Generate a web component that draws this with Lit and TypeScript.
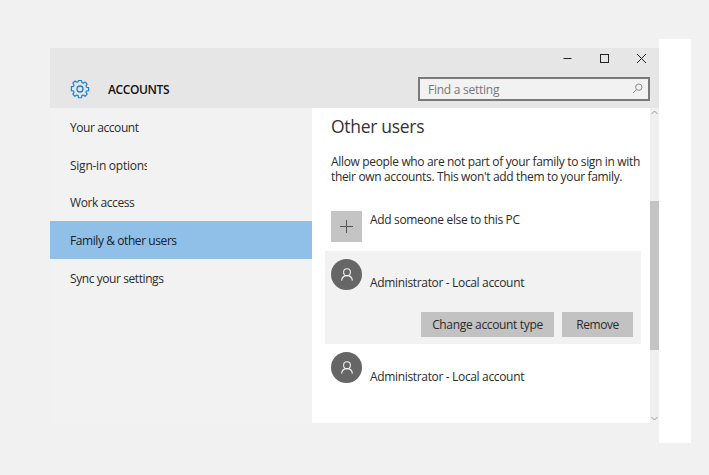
import { LitElement, html, css } from "lit";
import { customElement } from "lit/decorators.js";

const person = html`<svg class="person" viewBox="0 0 16 16" fill="none" stroke="#f0f0f0" stroke-width="1.1"><circle cx="8" cy="5.2" r="3.4"/><path d="M2.600 13.600c.3-3 2.500-5 5.400-5s5.100 2 5.400 5"/></svg>`;

@customElement("app-root")
export class AppRoot extends LitElement {
  static styles = css`
    :host { display: block; width: 709px; height: 475px; background: #f1f1f1; overflow: hidden;
      font-family: "Open Sans", "Noto Sans", sans-serif; font-size: 12px; letter-spacing: -0.34px; color: #2b2b2b; }
    .page { display: flex; align-items: flex-start; padding: 39px 0 0 50px; }
    .strip { width: 32px; height: 404px; background: #fff; }
    .win { width: 609px; height: 375px; margin-top: 9px; display: flex; flex-direction: column; }
    .head { height: 60px; background: #e6e6e6; display: flex; flex-direction: column; flex: none; }
    .controls { height: 21px; display: flex; justify-content: flex-end; align-items: center; gap: 26px; padding: 0 12px 0 0; flex: none; }
    .controls svg { width: 11px; height: 11px; display: block; }
    .bar { flex: 1; display: flex; align-items: center; padding: 0 9px 0 20px; }
    .gear { width: 20px; height: 20px; margin-right: 18px; flex: none; }
    .title { font-size: 12px; font-weight: 600; color: #111; flex: 1; padding-top: 1px; letter-spacing: -0.38px; }
    .search { width: 232px; height: 24px; box-sizing: border-box; border: 2px solid #7a7a7a; background: #f2f2f2;
      display: flex; align-items: center; justify-content: space-between; padding: 1px 5px 0 8px; color: #777; font-size: 12px; letter-spacing: -0.25px; }
    .search svg { width: 11px; height: 11px; margin-top: -1px; }
    .body { flex: 1; display: flex; min-height: 0; }
    .side { width: 262px; flex: none; background: #f2f2f2; display: flex; flex-direction: column; letter-spacing: -0.42px; }
    .item { height: 37.7px; box-sizing: border-box; display: flex; align-items: center; padding: 1px 0 0 20px; }
    .item.sel { background: #90c0e8; color: #14202c; }
    .clip { width: 76.500px; overflow: hidden; white-space: nowrap; letter-spacing: -0.25px; }
    .main { width: 338px; flex: none; background: #fff; box-sizing: border-box; padding: 7px 0 0 19px; }
    h2 { margin: -1px 0 16px; font-size: 17.500px; font-weight: 400; line-height: 24px; color: #333; letter-spacing: -0.3px; }
    p { margin: 0 0 27px; line-height: 15px; width: 320px; font-size: 12px; }
    .row { display: flex; align-items: flex-start; gap: 8px; }
    .add { height: 40px; }
    .plus { width: 31px; height: 31px; background: #c4c4c4; display: flex; align-items: center; justify-content: center; flex: none; }
    .plus svg { width: 13px; height: 13px; }
    .addt { line-height: 17px; }
    .card { margin: 0 9px 0 -6px; background: #f2f2f2; height: 93px; box-sizing: border-box; padding: 8px 8px 0 6px; display: flex; flex-direction: column; }
    .avatar { width: 31px; height: 31px; border-radius: 50%; background: #666; display: flex; align-items: center; justify-content: center; flex: none; }
    .person { width: 16px; height: 16px; }
    .name { margin-top: 15px; line-height: 17px; }
    .user .name { margin-top: 16px; }
    .btns { display: flex; justify-content: flex-end; gap: 8px; margin-top: 21px; }
    .btn { height: 25px; background: #c2c2c2; display: flex; align-items: center; justify-content: center; }
    .b1 { width: 133px; } .b2 { width: 71px; letter-spacing: -0.45px; }
    .user { padding-top: 8px; }
    .scroll { width: 9px; flex: none; background: #f0f0f0; display: flex; flex-direction: column; align-items: center; justify-content: space-between; position: relative; }
    .scroll svg { width: 7px; height: 5px; margin: 2px 0 2px; }
    .thumb { width: 9px; height: 149px; background: #c4c4c4; position: absolute; top: 93px; left: 0; }
  `;

  render() {
    return html`<div class="page">
      <div class="win">
        <div class="head">
          <div class="controls">
            <svg viewBox="0 0 11 11" fill="none" stroke="#222"><path d="M1.500 5.500h8"/></svg>
            <svg viewBox="0 0 11 11" fill="none" stroke="#222"><rect x="1.500" y="1.500" width="8" height="8"/></svg>
            <svg viewBox="0 0 11 11" fill="none" stroke="#222"><path d="M1 1l9 9M10 1l-9 9"/></svg>
          </div>
          <div class="bar">
            <svg class="gear" viewBox="0 0 20 20" fill="none" stroke="#1580d8" stroke-width="1.300" stroke-linejoin="round">
              <circle cx="10" cy="10" r="3"/>
              <path d="M8.300 1.200h3.400l.4 2.400 1.500.6 2-1.400 2.400 2.400-1.400 2 .6 1.500 2.400.4v3.400l-2.400.4-.6 1.500 1.400 2-2.400 2.400-2-1.400-1.500.6-.4 2.400H8.300l-.4-2.400-1.500-.6-2 1.400L2 16.400l1.400-2-.6-1.500-2.400-.4V8.100l2.400-.4.600-1.500-1.400-2L4.400 1.800l2 1.400 1.500-.6z" transform="translate(1 .4) scale(.9)"/>
            </svg>
            <div class="title">ACCOUNTS</div>
            <div class="search"><span>Find a setting</span>
              <svg viewBox="0 0 11 11" fill="none" stroke="#888"><circle cx="6.800" cy="4.200" r="3.200"/><path d="M4.500 6.500L1 10"/></svg>
            </div>
          </div>
        </div>
        <div class="body">
          <div class="side">
            <div class="item">Your account</div>
            <div class="item"><span class="clip">Sign-in options</span></div>
            <div class="item">Work access</div>
            <div class="item sel">Family &amp; other users</div>
            <div class="item">Sync your settings</div>
          </div>
          <div class="main">
            <h2>Other users</h2>
            <p>Allow people who are not part of your family to sign in with their own accounts. This won't add them to your family.</p>
            <div class="row add">
              <div class="plus"><svg viewBox="0 0 13 13" stroke="#555" fill="none"><path d="M6.500 0v13M0 6.500h13"/></svg></div>
              <div class="addt">Add someone else to this PC</div>
            </div>
            <div class="card">
              <div class="row"><div class="avatar">${person}</div><div class="name">Administrator - Local account</div></div>
              <div class="btns"><div class="btn b1">Change account type</div><div class="btn b2">Remove</div></div>
            </div>
            <div class="row user"><div class="avatar">${person}</div><div class="name">Administrator - Local account</div></div>
          </div>
          <div class="scroll">
            <svg viewBox="0 0 7 5" fill="none" stroke="#999"><path d="M.5 4L3.500 1l3 3"/></svg>
            <div class="thumb"></div>
            <svg viewBox="0 0 7 5" fill="none" stroke="#999"><path d="M.5 1l3 3 3-3"/></svg>
          </div>
        </div>
      </div>
      <div class="strip"></div>
    </div>`;
  }
}
